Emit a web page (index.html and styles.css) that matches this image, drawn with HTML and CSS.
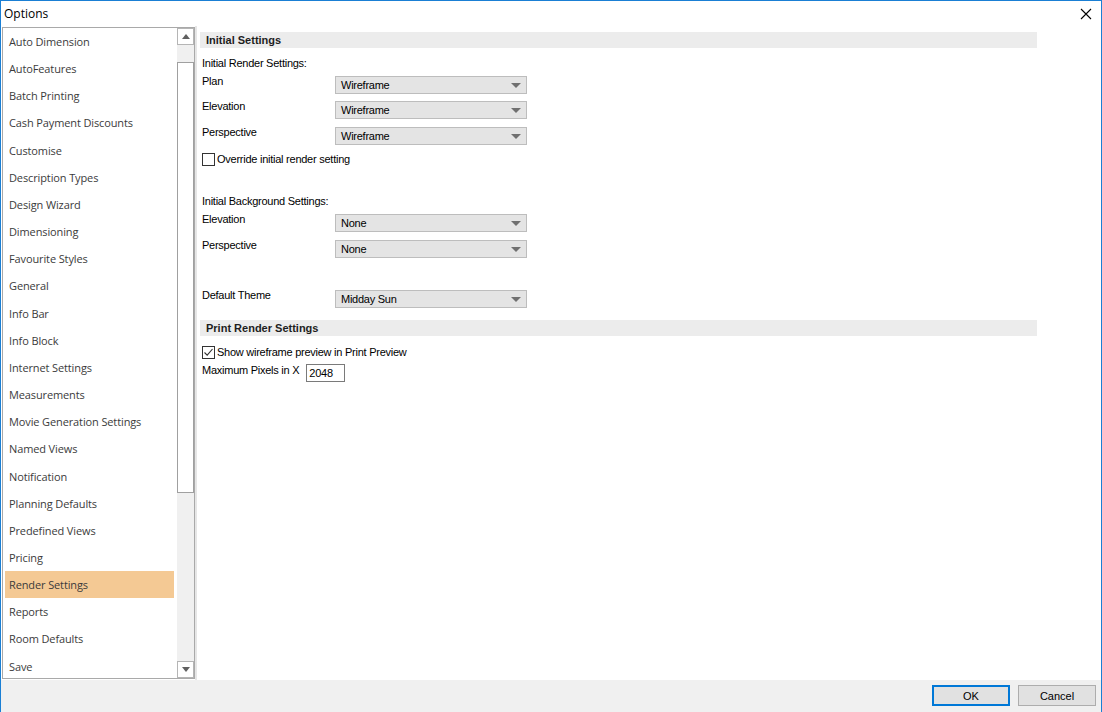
FILE: index.html
```html
<!DOCTYPE html>
<html lang="en">
    <head>
        <title>Options</title>
        <link rel="stylesheet" href="styles.css">
    </head>
    <body>
        <div class="window">
            <div class="titlebar">
                <span class="title">Options</span>
                <svg class="close" width="12" height="12" viewBox="0 0 12 12">
                    <path d="M1 1 L11 11 M11 1 L1 11" stroke="#000" stroke-width="1.1" fill="none"/>
                </svg>
            </div>
            <div class="main">
                <div class="listbox">
                    <ul class="items">
                        <li>Auto Dimension</li>
                        <li>AutoFeatures</li>
                        <li>Batch Printing</li>
                        <li>Cash Payment Discounts</li>
                        <li>Customise</li>
                        <li>Description Types</li>
                        <li>Design Wizard</li>
                        <li>Dimensioning</li>
                        <li>Favourite Styles</li>
                        <li>General</li>
                        <li>Info Bar</li>
                        <li>Info Block</li>
                        <li>Internet Settings</li>
                        <li>Measurements</li>
                        <li>Movie Generation Settings</li>
                        <li>Named Views</li>
                        <li>Notification</li>
                        <li>Planning Defaults</li>
                        <li>Predefined Views</li>
                        <li>Pricing</li>
                        <li class="selected">Render Settings</li>
                        <li>Reports</li>
                        <li>Room Defaults</li>
                        <li>Save</li>
                    </ul>
                    <div class="scrollbar">
                        <div class="sb-btn"><span class="arrow-up"></span></div>
                        <div class="sb-track">
                            <div class="sb-thumb"></div>
                        </div>
                        <div class="sb-btn"><span class="arrow-down"></span></div>
                    </div>
                </div>
                <div class="divider"></div>
                <div class="panel">
                    <div class="section">Initial Settings</div>
                    <div class="sub sub-first">Initial Render Settings:</div>
                    <div class="row row-a">
                        <span class="label">Plan</span>
                        <div class="combo"><span>Wireframe</span><i class="caret"></i></div>
                    </div>
                    <div class="row row-b">
                        <span class="label">Elevation</span>
                        <div class="combo"><span>Wireframe</span><i class="caret"></i></div>
                    </div>
                    <div class="row row-c">
                        <span class="label">Perspective</span>
                        <div class="combo"><span>Wireframe</span><i class="caret"></i></div>
                    </div>
                    <label class="check check-first">
                        <span class="box"></span>
                        <span>Override initial render setting</span>
                    </label>

                    <div class="sub sub-second">Initial Background Settings:</div>
                    <div class="row row-a">
                        <span class="label">Elevation</span>
                        <div class="combo"><span>None</span><i class="caret"></i></div>
                    </div>
                    <div class="row row-c">
                        <span class="label">Perspective</span>
                        <div class="combo"><span>None</span><i class="caret"></i></div>
                    </div>

                    <div class="row row-theme">
                        <span class="label">Default Theme</span>
                        <div class="combo"><span>Midday Sun</span><i class="caret"></i></div>
                    </div>

                    <div class="section section-print">Print Render Settings</div>
                    <label class="check check-second">
                        <span class="box">
                            <svg width="11" height="11" viewBox="0 0 11 11">
                                <path d="M1.5 5.5 L4.2 8.2 L9.5 2" stroke="#333" stroke-width="1.1" fill="none"/>
                            </svg>
                        </span>
                        <span>Show wireframe preview in Print Preview</span>
                    </label>
                    <div class="pixels">
                        <span>Maximum Pixels in X</span>
                        <div class="textbox">2048</div>
                    </div>
                </div>
            </div>
            <div class="footer">
                <button class="btn btn-default">OK</button>
                <button class="btn">Cancel</button>
            </div>
        </div>
    </body>
</html>
```

FILE: styles.css
```css
:root {
    --row-height: 27.17px;
    --panel-font: "Liberation Sans", Arial, sans-serif;
}

html, body {
    margin: 0;
    padding: 0;
}

body {
    width: 1102px;
    height: 712px;
    overflow: hidden;
    background: #fff;
}

.window {
    box-sizing: border-box;
    width: 1102px;
    height: 712px;
    border: 1px solid #1a7fd4;
    border-bottom: none;
    display: flex;
    flex-direction: column;
}

.titlebar {
    height: 25px;
    display: flex;
    align-items: center;
    justify-content: space-between;
    padding: 0 9px 0 3px;
}

.title {
    font-family: "Open Sans", sans-serif;
    font-size: 12px;
    color: #000;
}

.main {
    flex: 1;
    display: flex;
    min-height: 0;
}

/** left list */
.listbox {
    box-sizing: border-box;
    width: 193px;
    margin: 1px 0 1px 1px;
    border: 1px solid #a9a9a9;
    display: flex;
    background: #fff;
}

.items {
    list-style: none;
    margin: 0;
    padding: 0 0 0 2px;
    width: 170px;
    font-family: "Open Sans", sans-serif;
    font-size: 11px;
    letter-spacing: -0.12px;
    color: #3b3b3b;
}

.items li {
    height: var(--row-height);
    line-height: var(--row-height);
    padding-left: 4px;
    white-space: nowrap;
}

.items li.selected {
    background: #f4c994;
}

.scrollbar {
    margin-left: 3px;
    width: 17px;
    display: flex;
    flex-direction: column;
    background: #f0f0f0;
}

.sb-btn {
    box-sizing: border-box;
    height: 17px;
    border: 1px solid #b5b5b5;
    background: #fff;
    display: flex;
    align-items: center;
    justify-content: center;
}

.arrow-up, .arrow-down {
    width: 0;
    height: 0;
    border-left: 4px solid transparent;
    border-right: 4px solid transparent;
}

.arrow-up {
    border-bottom: 5px solid #606060;
}

.arrow-down {
    border-top: 5px solid #606060;
}

.sb-track {
    flex: 1;
    padding-top: 17px;
}

.sb-thumb {
    box-sizing: border-box;
    height: 431px;
    border: 1px solid #a0a0a0;
    background: #fff;
}

.divider {
    width: 2px;
    background: #e6e6e6;
}

/** settings panel */
.panel {
    flex: 1;
    display: flex;
    flex-direction: column;
    font-family: var(--panel-font);
    font-size: 11px;
    letter-spacing: -0.25px;
    color: #000;
    padding-left: 5px;
}

.section {
    margin: 6px 0 0 -2px;
    width: 837px;
    height: 16px;
    line-height: 16px;
    background: #ececec;
    padding-left: 6px;
    box-sizing: border-box;
    font-weight: bold;
    letter-spacing: 0;
    color: #1e1e1e;
}

.section-print {
    margin-top: 12px;
}

.sub {
    height: 14px;
    line-height: 14px;
}

.sub-first {
    margin-top: 8px;
}

.sub-second {
    margin-top: 28px;
}

.row {
    display: flex;
    align-items: flex-start;
    height: 20px;
}

.row-a {
    margin-top: 4px;
}

.row-b {
    margin-top: 5px;
}

.row-c {
    margin-top: 6px;
}

.row-theme {
    margin-top: 30px;
}

.label {
    width: 133px;
    line-height: 14px;
}

.combo {
    box-sizing: border-box;
    margin-top: 2px;
    width: 192px;
    height: 18px;
    border: 1px solid #bdbdbd;
    background: #e4e4e4;
    display: flex;
    align-items: center;
    justify-content: space-between;
    padding: 0 5px 0 5px;
}

.caret {
    width: 0;
    height: 0;
    border-left: 5px solid transparent;
    border-right: 5px solid transparent;
    border-top: 5px solid #707070;
}

.check {
    display: flex;
    align-items: center;
    gap: 2px;
    height: 14px;
}

.check-first {
    margin-top: 7px;
}

.check-second {
    margin-top: 9px;
}

.box {
    box-sizing: border-box;
    width: 13px;
    height: 13px;
    border: 1px solid #333;
    background: #fff;
    display: flex;
    align-items: center;
    justify-content: center;
}

.pixels {
    margin-top: 4px;
    display: flex;
    align-items: flex-start;
    gap: 7px;
    line-height: 14px;
}

.textbox {
    box-sizing: border-box;
    margin-top: 1px;
    width: 39px;
    height: 18px;
    line-height: 16px;
    border: 1px solid #7a7a7a;
    padding-left: 2px;
    background: #fff;
}

/** bottom bar */
.footer {
    height: 32px;
    background: #f0f0f0;
    display: flex;
    justify-content: flex-end;
    align-items: flex-start;
    gap: 8px;
    padding: 5px 5px 0 0;
    box-sizing: border-box;
}

.btn {
    box-sizing: border-box;
    width: 78px;
    height: 21px;
    border: 1px solid #adadad;
    background: #e1e1e1;
    font-family: var(--panel-font);
    font-size: 11px;
    color: #000;
    padding: 0;
}

.btn-default {
    border: 1px solid #0078d7;
    box-shadow: inset 0 0 0 1px #0078d7;
}
```
